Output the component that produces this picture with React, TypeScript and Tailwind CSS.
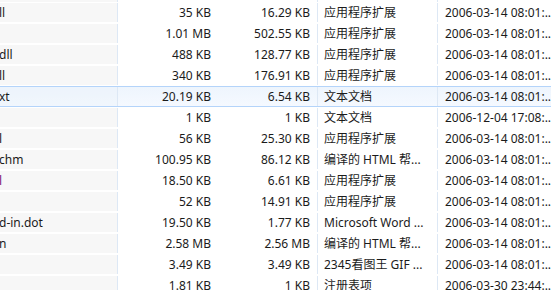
type Row = {
  name: string;
  nameColor?: string;
  size: string;
  packed: string;
  type: string;
  date: string;
};

const rows: Row[] = [
  { name: "ll", size: "35 KB", packed: "16.29 KB", type: "应用程序扩展", date: "2006-03-14 08:01:..." },
  { name: "", size: "1.01 MB", packed: "502.55 KB", type: "应用程序扩展", date: "2006-03-14 08:01:..." },
  { name: "dll", size: "488 KB", packed: "128.77 KB", type: "应用程序扩展", date: "2006-03-14 08:01:..." },
  { name: "ll", size: "340 KB", packed: "176.91 KB", type: "应用程序扩展", date: "2006-03-14 08:01:..." },
  { name: "xt", size: "20.19 KB", packed: "6.54 KB", type: "文本文档", date: "2006-03-14 08:01:..." },
  { name: "", size: "1 KB", packed: "1 KB", type: "文本文档", date: "2006-12-04 17:08:..." },
  { name: "l", size: "56 KB", packed: "25.30 KB", type: "应用程序扩展", date: "2006-03-14 08:01:..." },
  { name: "chm", size: "100.95 KB", packed: "86.12 KB", type: "编译的 HTML 帮...", date: "2006-03-14 08:01:..." },
  { name: "l", nameColor: "text-[#7b1778]", size: "18.50 KB", packed: "6.61 KB", type: "应用程序扩展", date: "2006-03-14 08:01:..." },
  { name: "", size: "52 KB", packed: "14.91 KB", type: "应用程序扩展", date: "2006-03-14 08:01:..." },
  { name: "d-in.dot", size: "19.50 KB", packed: "1.77 KB", type: "Microsoft Word ...", date: "2006-03-14 08:01:..." },
  { name: "n", size: "2.58 MB", packed: "2.56 MB", type: "编译的 HTML 帮...", date: "2006-03-14 08:01:..." },
  { name: "", size: "3.49 KB", packed: "3.49 KB", type: "2345看图王 GIF ...", date: "2006-03-14 08:01:..." },
  { name: "", size: "1.81 KB", packed: "1 KB", type: "注册表项", date: "2006-03-30 23:44:..." },
];

const SELECTED = 4;

function FileRow({ row, selected }: { row: Row; selected: boolean }) {
  return (
    <div
      className={
        "grid grid-cols-[118px_100px_100px_120px_1fr] h-[21px] leading-[19px] border-y " +
        (selected
          ? "border-[#b4d4fa] bg-gradient-to-b from-[#eef5fd] to-[#f5f9ff]"
          : "border-transparent")
      }
    >
      <div
        className={
          "border-r border-[#dde8f5] pl-0 overflow-hidden whitespace-nowrap -ml-px " +
          (selected ? "bg-[#ecf2f9]/40" : "bg-[#f7f7f7]") +
          " " +
          (row.nameColor ?? "")
        }
      >
        {row.name}
      </div>
      <div className="text-right pr-[7px] whitespace-nowrap">{row.size}</div>
      <div className="text-right pr-[7px] whitespace-nowrap border-r border-[#dde8f5]">
        {row.packed}
      </div>
      <div className="pl-[6px] whitespace-nowrap overflow-hidden border-r border-[#dde8f5]">
        {row.type}
      </div>
      <div className="pl-[7px] whitespace-nowrap overflow-hidden">{row.date}</div>
    </div>
  );
}

export default function App() {
  return (
    <div
      className="w-[551px] h-[290px] overflow-hidden bg-white text-[12px] text-[#1b1b1b]"
      style={{ fontFamily: '"Noto Sans", "Noto Sans CJK SC", sans-serif' }}
    >
      <div className="grid grid-cols-[118px_100px_100px_120px_1fr] h-[2px]">
        <div className="bg-[#f7f7f7] border-r border-[#dde8f5] -ml-px" />
        <div />
        <div className="border-r border-[#dde8f5]" />
        <div className="border-r border-[#dde8f5]" />
        <div />
      </div>
      {rows.map((row, i) => (
        <FileRow key={i} row={row} selected={i === SELECTED} />
      ))}
    </div>
  );
}
